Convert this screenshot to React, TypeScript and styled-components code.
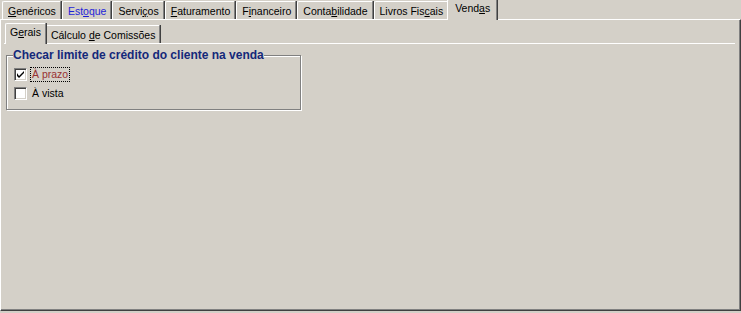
import React from 'react';
import styled, { createGlobalStyle } from 'styled-components';

const GlobalStyle = createGlobalStyle`
  html, body {
    margin: 0;
    padding: 0;
    background: #d4d0c8;
  }
  body {
    font-family: 'Liberation Sans', Arial, sans-serif;
    font-size: 10.5px;
    color: #000000;
  }
`;

const Window = styled.div`
  width: 741px;
  height: 313px;
  background: #d4d0c8;
  display: flex;
  flex-direction: column;
  overflow: hidden;
`;

const TabStrip = styled.div<{ $inset?: number }>`
  display: flex;
  align-items: flex-end;
  padding-left: ${p => p.$inset ?? 2}px;
  height: ${p => (p.$inset ? 20 : 19)}px;
  position: relative;
  z-index: 1;
`;

const Tab = styled.div<{ $active?: boolean; $hot?: boolean; $tight?: boolean }>`
  box-sizing: border-box;
  height: ${p => (p.$active ? 21 : 18)}px;
  margin: ${p => (p.$active ? '0 -1px -1px -2px' : '0 1px 0 0')};
  padding: ${p =>
    p.$active ? (p.$tight ? '1px 4px 0 4px' : '1px 6px 0 7px') : '2px 4px 0 5px'};
  border-left: 1px solid #ffffff;
  border-top: 1px solid #ffffff;
  border-right: 1px solid #808080;
  box-shadow: 1px 0 0 #404040;
  border-top-left-radius: 2px;
  background: #d4d0c8;
  color: ${p => (p.$hot ? '#1f1fd8' : '#000000')};
  white-space: nowrap;
  line-height: 14px;
  position: relative;
  z-index: ${p => (p.$active ? 2 : 1)};

  u {
    text-decoration: underline;
    text-underline-offset: 1px;
  }
`;

const Panel = styled.div`
  box-sizing: border-box;
  flex: 0 0 auto;
  width: 741px;
  height: 292px;
  border-top: 1px solid #ffffff;
  border-left: 1px solid #ffffff;
  border-right: 1px solid #404040;
  border-bottom: 1px solid #404040;
  box-shadow: inset -1px -1px 0 #808080;
  padding: 3px 4px 0 3px;
  display: flex;
  flex-direction: column;
`;

const InnerPanel = styled.div`
  border-top: 1px solid #ffffff;
  flex: 1;
  margin-right: 1px;
  padding: 4px 2px 0 2px;
`;

const Group = styled.fieldset`
  box-sizing: border-box;
  width: 295px;
  height: 62px;
  margin: 0;
  padding: 0 6px;
  border: 1px solid #808080;
  box-shadow: inset 1px 1px 0 #ffffff, 1px 1px 0 #ffffff;
`;

const Legend = styled.legend`
  padding: 0;
  font-weight: bold;
  font-size: 12px;
  line-height: 14px;
  color: #14287a;
  background: #d4d0c8;
  position: relative;
`;

const OptionList = styled.div`
  display: flex;
  flex-direction: column;
  gap: 5px;
  padding: 5px 0 0 1px;
`;

const Option = styled.label`
  display: flex;
  align-items: center;
  gap: 4px;
  height: 14px;
`;

const Box = styled.span`
  box-sizing: border-box;
  width: 13px;
  height: 13px;
  background: #ffffff;
  border-top: 1px solid #808080;
  border-left: 1px solid #808080;
  border-right: 1px solid #ffffff;
  border-bottom: 1px solid #ffffff;
  box-shadow: inset 1px 1px 0 #404040, inset -1px -1px 0 #d4d0c8;
  display: flex;
  align-items: center;
  justify-content: center;
`;

const Caption = styled.span<{ $focused?: boolean }>`
  padding: 0 1px;
  line-height: 13px;
  color: ${p => (p.$focused ? '#983232' : '#000000')};
  outline: ${p => (p.$focused ? '1px dotted #000000' : 'none')};
`;

const outerTabs: { label: React.ReactNode; hot?: boolean; active?: boolean }[] = [
  { label: <><u>G</u>enéricos</> },
  { label: <>Est<u>o</u>que</>, hot: true },
  { label: <>Servi<u>ç</u>os</> },
  { label: <><u>F</u>aturamento</> },
  { label: <>F<u>i</u>nanceiro</> },
  { label: <>Conta<u>b</u>ilidade</> },
  { label: <>Livros Fis<u>c</u>ais</> },
  { label: <>Vend<u>a</u>s</>, active: true },
];

const CheckMark = () => (
  <svg width="7" height="7" viewBox="0 0 7 7">
    <path d="M0 2 L0 5 L2 7 L7 2 L7 0 L2 5 Z" fill="#000000" />
  </svg>
);

export default function App() {
  return (
    <>
      <GlobalStyle />
      <Window>
        <TabStrip>
          {outerTabs.map((t, i) => (
            <Tab key={i} $active={t.active} $hot={t.hot}>
              {t.label}
            </Tab>
          ))}
        </TabStrip>
        <Panel>
          <TabStrip $inset={3}>
            <Tab $active $tight>
              G<u>e</u>rais
            </Tab>
            <Tab>
              Cálculo <u>d</u>e Comissões
            </Tab>
          </TabStrip>
          <InnerPanel>
            <Group>
              <Legend>Checar limite de crédito do cliente na venda</Legend>
              <OptionList>
                <Option>
                  <Box>
                    <CheckMark />
                  </Box>
                  <Caption $focused>À prazo</Caption>
                </Option>
                <Option>
                  <Box />
                  <Caption>À vista</Caption>
                </Option>
              </OptionList>
            </Group>
          </InnerPanel>
        </Panel>
      </Window>
    </>
  );
}
